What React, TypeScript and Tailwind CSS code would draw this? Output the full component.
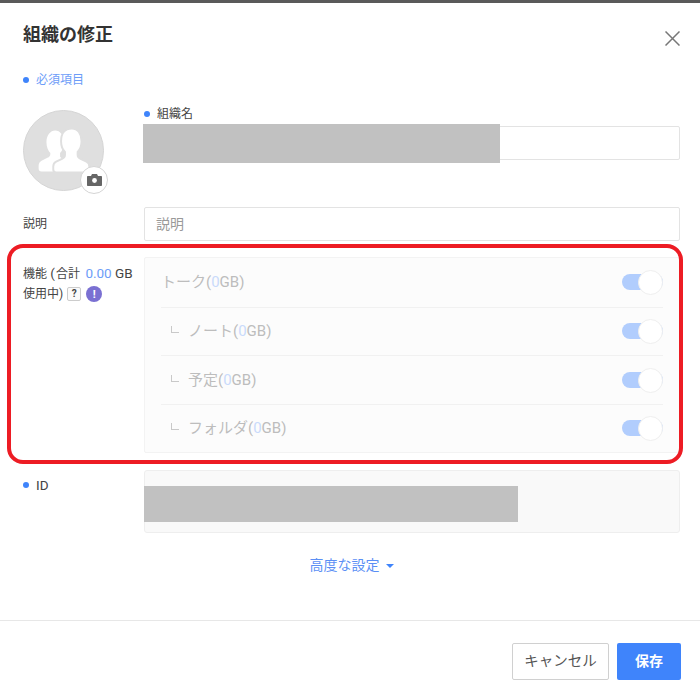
const FEATURES = [
	{ label: "トーク", child: false },
	{ label: "ノート", child: true },
	{ label: "予定", child: true },
	{ label: "フォルダ", child: true },
];

function Req({ children }: { children: React.ReactNode }) {
	return (
		<div className="flex items-center gap-[7px] text-[12px] leading-[18px]">
			<span className="size-[6px] rounded-full bg-[#3f84fb]" />
			{children}
		</div>
	);
}

function Toggle() {
	return (
		<div className="relative h-4 w-[41px] rounded-full bg-[#b1cdfd]">
			<span className="absolute -top-[4px] right-0 size-[25px] rounded-full border border-[#efefef] bg-white" />
		</div>
	);
}

export default function App() {
	return (
		<div className="relative h-[700px] w-[700px] overflow-hidden border-t-[3px] border-[#5a5a5a] bg-white text-[#444] [font-family:Roboto,'Noto_Sans_CJK_JP',sans-serif]">
			{/* header */}
			<div className="flex items-start justify-between pl-[23px] pr-5 pt-[20px]">
				<h1 className="text-[18px] font-bold leading-6 text-[#333]">組織の修正</h1>
				<svg viewBox="0 0 15 15" className="mt-[8px] size-[15px]" stroke="#777" strokeWidth="1.5">
					<path d="M0.5 0.5l14 14M14.5 0.5l-14 14" />
				</svg>
			</div>

			<div className="flex flex-col pl-[23px] pr-[20px] pt-[24px]">
				<div className="text-[#6d9df8]">
					<Req>必須項目</Req>
				</div>

				{/* avatar + name */}
				<div className="mt-[16px] flex">
					<div className="relative mt-[5px] h-[81px] w-[81px] shrink-0 rounded-full border border-[#d5d5d5] bg-[#dfdfdf]">
						<svg viewBox="0 0 81 81" className="size-full">
							<path d="M32 20c5 0 9 5 9 12 0 5-2 9-4 11v4l4 4-7 11H18c-2 0-3-1-3-3v-3c0-2 1-4 3-5l6-3c2-1 3-2 3-4v-1c-2-2-4-6-4-11 0-7 4-12 9-12z" fill="#fff" />
							<path d="M49 18c6 0 10 5 10 13 0 5-2 9-4 11v3c0 2 1 3 3 4l6 3c2 1 3 3 3 5v3c0 2-1 3-3 3H33c-2 0-3-1-3-3v-3c0-2 1-4 3-5l6-3c2-1 3-2 3-4v-3c-2-2-4-6-4-11 0-8 4-13 11-13z" fill="#fff" stroke="#dfdfdf" strokeWidth="2" />
						</svg>
						<span className="absolute -bottom-[4px] -right-[5px] flex size-[28px] items-center justify-center rounded-full border border-[#d5d5d5] bg-white">
							<svg viewBox="0 0 15 12" className="h-[12px] w-[15px]">
								<path d="M1 2h3l1-2h5l1 2h3c.6 0 1 .4 1 1v8c0 .6-.4 1-1 1H1c-.6 0-1-.4-1-1V3c0-.6.4-1 1-1z" fill="#666" />
								<circle cx="7.5" cy="6.5" r="2.4" fill="#fff" />
							</svg>
						</span>
					</div>
					<div className="ml-10 flex-1">
						<Req>組織名</Req>
						<div className="mt-[3px] h-[34px] rounded-[2px] border border-[#e3e3e3] bg-white" />
					</div>
				</div>

				{/* description */}
				<div className="mt-[16px] flex items-center">
					<label className="w-[121px] shrink-0 text-[12px]">説明</label>
					<div className="flex h-[34px] flex-1 items-center rounded-[2px] border border-[#e3e3e3] px-[11px] text-[14px] text-[#999]">
						説明
					</div>
				</div>

				{/* features */}
				<div className="mt-[16px] flex">
					<div className="w-[121px] shrink-0 pt-[6px] leading-[20px]">
						<div className="whitespace-nowrap text-[13.5px]">
							<span className="text-[12px]">機能</span> (<span className="ml-[1px] text-[12px]">合計</span> <span className="ml-[2px] text-[#6d9df8]">0.00</span> GB
						</div>
						<div className="flex items-center text-[12px]">
							使用中)
							<span className="ml-[4px] flex size-[14px] items-center justify-center rounded-[2px] border border-[#ccc] bg-[#fafafa] text-[10px] font-bold leading-none">?</span>
							<span className="ml-[5px] flex size-4 items-center justify-center rounded-full bg-[#7a70d2] text-[11px] font-bold leading-none text-white">!</span>
						</div>
					</div>
					<div className="h-[196px] flex-1 rounded-[2px] border border-[#f3f3f3] bg-[#fcfcfc] px-[16px]">
						{FEATURES.map((f, i) => (
							<div
								key={f.label}
								className={`flex h-[48.5px] items-center justify-between ${i > 0 ? "border-t border-[#f1f1f1]" : ""}`}
							>
								<div className="flex items-center text-[15px] text-[#bdbdbd]">
									{f.child && <span className="-mt-[3px] ml-[10px] mr-[9px] h-[7px] w-2 border-b border-l border-[#c9c9c9]" />}
									{f.label}(<span className="text-[#c9dafb]">0</span>GB)
								</div>
								<Toggle />
							</div>
						))}
					</div>
				</div>

				{/* id */}
				<div className="mt-[17px] flex">
					<div className="w-[121px] shrink-0 pt-[6px] [&_div]:text-[13.5px]">
						<Req>ID</Req>
					</div>
					<div className="h-[63px] flex-1 rounded-[3px] border border-[#eeeeee] bg-[#f9f9f9]" />
				</div>

				<div className="mt-[22px] flex items-center justify-center gap-[6px] text-[14px] leading-5 text-[#5b8ff5]">
					高度な設定
					<span className="mt-[2px] border-x-[4px] border-t-[4px] border-x-transparent border-t-[#3f84fb]" />
				</div>
			</div>

			{/* footer */}
			<div className="mt-[45px] flex justify-end gap-2 border-t border-[#e7e7e7] pr-[19px] pt-[22px]">
				<button className="h-[37px] w-[97px] rounded-[2px] border border-[#d0d0d0] bg-white text-[14.5px] text-[#555]">キャンセル</button>
				<button className="h-[37px] w-[64px] rounded-[2px] bg-[#3f84fb] text-[14px] font-bold text-white">保存</button>
			</div>

			{/* redaction blocks and highlight frame lie over the form */}
			<div className="absolute left-[143px] top-[121px] h-[39px] w-[357px] bg-[#c1c1c1]" />
			<div className="absolute left-[144px] top-[483px] h-[36px] w-[374px] bg-[#c1c1c1]" />
			<div className="absolute left-[7px] top-[241px] h-[220px] w-[676px] rounded-[16px] border-[4px] border-[#ed1c24]" />
		</div>
	);
}
